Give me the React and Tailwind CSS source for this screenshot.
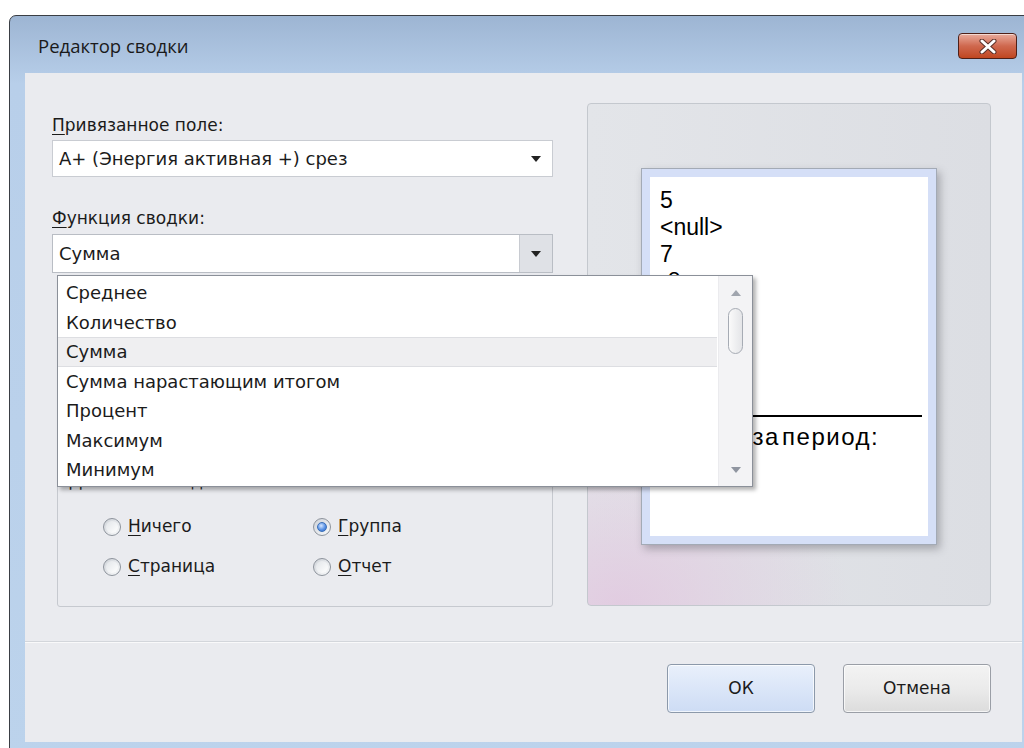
import React from "react";

function Key({ children }) {
  return <span className="underline decoration-1 underline-offset-[3px]">{children}</span>;
}

function Caret({ className = "" }) {
  return (
    <svg width="10" height="6" viewBox="0 0 10 6" className={className}>
      <path d="M0 0H10L5 6Z" fill="currentColor" />
    </svg>
  );
}

function Radio({ checked, children }) {
  return (
    <div className="flex items-center gap-[7px] h-[20px]">
      <span className="w-[18px] h-[18px] rounded-full border border-[#8d939c] bg-gradient-to-br from-[#cfd3d9] to-[#f9fafb] flex items-center justify-center">
        {checked ? (
          <span className="w-[10px] h-[10px] rounded-full border border-[#3a6fb8] bg-[radial-gradient(circle_at_40%_35%,#d4e6ff,#5b93e6_55%,#2c62c2)]" />
        ) : (
          <span className="w-[12px] h-[12px] rounded-full bg-gradient-to-br from-[#e2e5e9] to-white" />
        )}
      </span>
      <span>{children}</span>
    </div>
  );
}

const items = [
  "Среднее",
  "Количество",
  "Сумма",
  "Сумма нарастающим итогом",
  "Процент",
  "Максимум",
  "Минимум",
];

export default function App() {
  return (
    <div className="w-[1024px] h-[748px] overflow-hidden bg-white">
      {/* window frame */}
      <div className="ml-[9px] mt-[15px] w-[1030px] h-[760px] rounded-t-[7px] border border-[#3a3e44] bg-gradient-to-b from-[#9db5d3] via-[#b8cfea] via-[9%] to-[#bcd3ec] flex flex-col px-[15px] pb-[15px]">
        {/* title bar */}
        <div className="h-[57px] flex items-start justify-between shrink-0">
          <span className="mt-[18px] ml-[13px] text-[18.5px] leading-[24px] text-[#1a1a1a] font-['Open_Sans',sans-serif]">
            Редактор сводки
          </span>
          <div className="mt-[17px] mr-[6px] w-[59px] h-[26px] rounded-[4px] border border-[#4e2018] bg-gradient-to-b from-[#e8ab9d] via-[#cf684e] via-[50%] to-[#c0461f] shadow-[inset_0_1px_0_rgba(255,255,255,0.55)] flex items-center justify-center">
            <svg width="18" height="15" viewBox="0 0 18 15">
              <path d="M3 2L15 13M15 2L3 13" stroke="#5a2f28" strokeWidth="5" strokeLinecap="round" />
              <path d="M3 2L15 13M15 2L3 13" stroke="#ffffff" strokeWidth="3" strokeLinecap="round" />
            </svg>
          </div>
        </div>

        {/* client area */}
        <div className="relative w-[997px] h-[669px] bg-[#eaebef] flex flex-col font-['DejaVu_Sans',sans-serif] text-[18px] text-[#1b1b1b]">
          <div className="h-[568px] flex items-start pt-[30px] pl-[27px] gap-[34px] shrink-0">
            {/* left column */}
            <div className="w-[501px] flex flex-col">
              <div className="mt-[12px] h-[20px] leading-[20px] text-[17px]">
                <Key>П</Key>ривязанное поле:
              </div>
              <div className="mt-[5px] h-[37px] bg-white border border-[#c9ccd2] flex items-center pl-[6px] pr-[11px]">
                <span className="flex-1">А+ (Энергия активная +) срез</span>
                <Caret className="text-[#222]" />
              </div>
              <div className="mt-[31px] h-[20px] leading-[20px] text-[17px]">
                <Key>Ф</Key>ункция сводки:
              </div>
              <div className="mt-[6px] h-[39px] bg-white border border-[#b9bdc4] flex items-stretch">
                <span className="flex-1 flex items-center pl-[6px]">Сумма</span>
                <span className="w-[33px] bg-[#dfe1e6] border-l border-[#c8cbd1] flex items-center justify-center">
                  <Caret className="text-[#222]" />
                </span>
              </div>

              <fieldset className="mt-[198px] ml-[5px] h-[136px] border border-[#c6c9cf] rounded-[3px] px-0 pb-0">
                <legend className="ml-[8px] px-[3px] leading-[20px] text-[17px]">Диапазон сводки:</legend>
                <div className="mt-[26px] pl-[45px] grid grid-cols-[210px_auto] gap-y-[20px] text-[17px]">
                  <Radio>
                    <Key>Н</Key>ичего
                  </Radio>
                  <Radio checked>
                    <Key>Г</Key>руппа
                  </Radio>
                  <Radio>
                    <Key>С</Key>траница
                  </Radio>
                  <Radio>
                    <Key>О</Key>тчет
                  </Radio>
                </div>
              </fieldset>
            </div>

            {/* preview */}
            <div className="w-[404px] h-[503px] rounded-[4px] border border-[#c4c8ce] bg-[radial-gradient(ellipse_230px_170px_at_8%_100%,rgba(225,196,222,0.75),rgba(225,196,222,0)),linear-gradient(to_right,#e3e5e9,#dcdee3)] pl-[53px] pt-[64px]">
              <div className="w-[296px] h-[377px] border border-[#a3aab5] bg-[#d5dff7] p-[8px] shadow-[3px_4px_8px_rgba(60,60,70,0.35)]">
                <div className="h-full bg-white pl-[10px] pr-[6px] pt-[10px] font-['Liberation_Sans',sans-serif] text-[23px] leading-[27px] text-black">
                  <div>5</div>
                  <div>&lt;null&gt;</div>
                  <div>7</div>
                  <div>-8</div>
                  <div className="mt-[120px] h-[2px] bg-black" />
                  <div className="mt-[6px] ml-[20px] text-[24px] tracking-[1.5px] [word-spacing:-6px] whitespace-nowrap">
                    Итого за период:
                  </div>
                </div>
              </div>
            </div>
          </div>

          {/* separator */}
          <div className="h-[2px] border-t border-[#d3d6db] bg-white/70 shrink-0" />

          {/* buttons */}
          <div className="flex justify-end gap-[28px] pr-[31px] pt-[21px]">
            <button className="w-[148px] h-[49px] rounded-[4px] border border-[#8c99aa] bg-gradient-to-b from-[#e9f0fb] via-[#dbe6f8] to-[#cddcf4] shadow-[inset_0_0_0_1px_rgba(255,255,255,0.7)] text-[17px] text-[#1b1b1b]">
              ОК
            </button>
            <button className="w-[148px] h-[49px] rounded-[4px] border border-[#9a9ea6] bg-gradient-to-b from-[#f3f3f3] via-[#ebebeb] to-[#dcdcdc] shadow-[inset_0_0_0_1px_rgba(255,255,255,0.7)] text-[17px] text-[#1b1b1b]">
              Отмена
            </button>
          </div>

          {/* open list of the summary function combo */}
          <div className="absolute left-[32px] top-[202px] w-[696px] h-[212px] bg-white border border-[#8b9099] shadow-[3px_3px_4px_rgba(0,0,0,0.3)] flex">
            <div className="flex-1 pt-[2px] pr-[1px]">
              {items.map((t) => (
                <div
                  key={t}
                  className={
                    t === "Сумма"
                      ? "h-[29.5px] flex items-center pl-[8px] bg-[#efeff1] border-y border-[#dddee2]"
                      : "h-[29.5px] flex items-center pl-[8px]"
                  }
                >
                  {t}
                </div>
              ))}
            </div>
            <div className="w-[34px] bg-[#f3f3f5] border-l border-[#ebebee] flex flex-col items-center">
              <Caret className="mt-[14px] rotate-180 text-[#a0a5ae]" />
              <div className="mt-[12px] w-[15px] h-[46px] rounded-full border border-[#a6abb4] bg-gradient-to-r from-[#fafafa] to-[#e4e5e8]" />
              <div className="flex-1" />
              <Caret className="mb-[13px] text-[#8f95a0]" />
            </div>
          </div>
        </div>
      </div>
    </div>
  );
}
